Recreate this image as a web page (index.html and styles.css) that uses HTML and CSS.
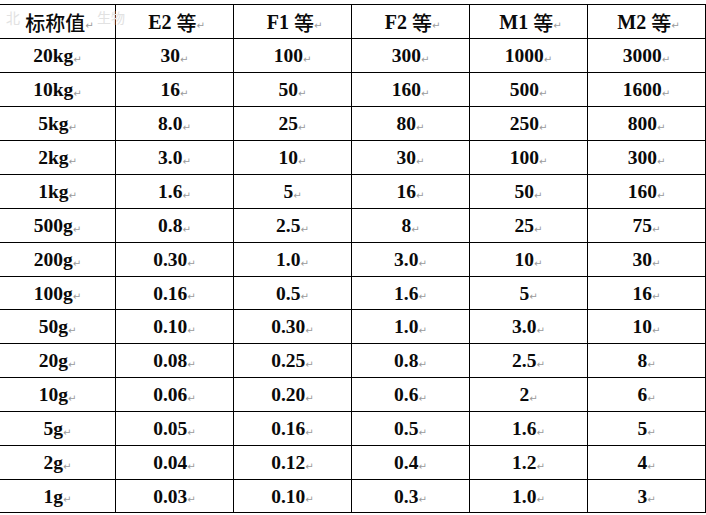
FILE: index.html
```html
<!DOCTYPE html>
<html lang="zh">
<head>
<meta charset="utf-8">
<title>砝码最大允许误差</title>
<link rel="stylesheet" href="styles.css">
</head>
<body>
<div class="page">
  <span class="watermark wm-left">北</span>
  <span class="watermark wm-right">生物</span>
  <div class="grid">
    <div class="cell head"><span class="cjk">标称值</span><span class="pm">↵</span></div>
    <div class="cell head">E2&nbsp;<span class="cjk">等</span><span class="pm">↵</span></div>
    <div class="cell head">F1&nbsp;<span class="cjk">等</span><span class="pm">↵</span></div>
    <div class="cell head">F2&nbsp;<span class="cjk">等</span><span class="pm">↵</span></div>
    <div class="cell head">M1&nbsp;<span class="cjk">等</span><span class="pm">↵</span></div>
    <div class="cell head">M2&nbsp;<span class="cjk">等</span><span class="pm">↵</span></div>

    <div class="cell">20kg<span class="pm">↵</span></div><div class="cell">30<span class="pm">↵</span></div><div class="cell">100<span class="pm">↵</span></div><div class="cell">300<span class="pm">↵</span></div><div class="cell">1000<span class="pm">↵</span></div><div class="cell">3000<span class="pm">↵</span></div>
    <div class="cell">10kg<span class="pm">↵</span></div><div class="cell">16<span class="pm">↵</span></div><div class="cell">50<span class="pm">↵</span></div><div class="cell">160<span class="pm">↵</span></div><div class="cell">500<span class="pm">↵</span></div><div class="cell">1600<span class="pm">↵</span></div>
    <div class="cell">5kg<span class="pm">↵</span></div><div class="cell">8.0<span class="pm">↵</span></div><div class="cell">25<span class="pm">↵</span></div><div class="cell">80<span class="pm">↵</span></div><div class="cell">250<span class="pm">↵</span></div><div class="cell">800<span class="pm">↵</span></div>
    <div class="cell">2kg<span class="pm">↵</span></div><div class="cell">3.0<span class="pm">↵</span></div><div class="cell">10<span class="pm">↵</span></div><div class="cell">30<span class="pm">↵</span></div><div class="cell">100<span class="pm">↵</span></div><div class="cell">300<span class="pm">↵</span></div>
    <div class="cell">1kg<span class="pm">↵</span></div><div class="cell">1.6<span class="pm">↵</span></div><div class="cell">5<span class="pm">↵</span></div><div class="cell">16<span class="pm">↵</span></div><div class="cell">50<span class="pm">↵</span></div><div class="cell">160<span class="pm">↵</span></div>
    <div class="cell">500g<span class="pm">↵</span></div><div class="cell">0.8<span class="pm">↵</span></div><div class="cell">2.5<span class="pm">↵</span></div><div class="cell">8<span class="pm">↵</span></div><div class="cell">25<span class="pm">↵</span></div><div class="cell">75<span class="pm">↵</span></div>
    <div class="cell">200g<span class="pm">↵</span></div><div class="cell">0.30<span class="pm">↵</span></div><div class="cell">1.0<span class="pm">↵</span></div><div class="cell">3.0<span class="pm">↵</span></div><div class="cell">10<span class="pm">↵</span></div><div class="cell">30<span class="pm">↵</span></div>
    <div class="cell">100g<span class="pm">↵</span></div><div class="cell">0.16<span class="pm">↵</span></div><div class="cell">0.5<span class="pm">↵</span></div><div class="cell">1.6<span class="pm">↵</span></div><div class="cell">5<span class="pm">↵</span></div><div class="cell">16<span class="pm">↵</span></div>
    <div class="cell">50g<span class="pm">↵</span></div><div class="cell">0.10<span class="pm">↵</span></div><div class="cell">0.30<span class="pm">↵</span></div><div class="cell">1.0<span class="pm">↵</span></div><div class="cell">3.0<span class="pm">↵</span></div><div class="cell">10<span class="pm">↵</span></div>
    <div class="cell">20g<span class="pm">↵</span></div><div class="cell">0.08<span class="pm">↵</span></div><div class="cell">0.25<span class="pm">↵</span></div><div class="cell">0.8<span class="pm">↵</span></div><div class="cell">2.5<span class="pm">↵</span></div><div class="cell">8<span class="pm">↵</span></div>
    <div class="cell">10g<span class="pm">↵</span></div><div class="cell">0.06<span class="pm">↵</span></div><div class="cell">0.20<span class="pm">↵</span></div><div class="cell">0.6<span class="pm">↵</span></div><div class="cell">2<span class="pm">↵</span></div><div class="cell">6<span class="pm">↵</span></div>
    <div class="cell">5g<span class="pm">↵</span></div><div class="cell">0.05<span class="pm">↵</span></div><div class="cell">0.16<span class="pm">↵</span></div><div class="cell">0.5<span class="pm">↵</span></div><div class="cell">1.6<span class="pm">↵</span></div><div class="cell">5<span class="pm">↵</span></div>
    <div class="cell">2g<span class="pm">↵</span></div><div class="cell">0.04<span class="pm">↵</span></div><div class="cell">0.12<span class="pm">↵</span></div><div class="cell">0.4<span class="pm">↵</span></div><div class="cell">1.2<span class="pm">↵</span></div><div class="cell">4<span class="pm">↵</span></div>
    <div class="cell">1g<span class="pm">↵</span></div><div class="cell">0.03<span class="pm">↵</span></div><div class="cell">0.10<span class="pm">↵</span></div><div class="cell">0.3<span class="pm">↵</span></div><div class="cell">1.0<span class="pm">↵</span></div><div class="cell">3<span class="pm">↵</span></div>
  </div>
</div>
</body>
</html>
```

FILE: styles.css
```css
html, body {
  margin: 0;
  padding: 0;
  background: #ffffff;
}

.page {
  position: relative;
  width: 706px;
  height: 515px;
  overflow: hidden;
  padding-top: 4px;
  box-sizing: border-box;
}

.grid {
  display: grid;
  grid-template-columns: 116px repeat(5, 118px);
  grid-template-rows: 34px 34px 34px 34px 34px 34px 34px 34px 33px 34px 34px 34px 34px 34px 33px;
  width: 706px;
  border-top: 1px solid #000;
}

.cell {
  box-sizing: border-box;
  border-right: 1px solid #000;
  border-bottom: 1px solid #000;
  display: flex;
  align-items: center;
  justify-content: center;
  font-family: "Liberation Serif", "Noto Sans CJK SC", serif;
  font-weight: bold;
  font-size: 19.5px;
  color: #0a0a0a;
  padding-top: 1px;
  white-space: nowrap;
}

.head {
  font-size: 20px;
  padding-left: 4px;
}

.cjk {
  font-family: "Noto Sans CJK SC", sans-serif;
  font-weight: 500;
  font-size: 20px;
}

.pm {
  font-family: "DejaVu Sans", sans-serif;
  font-weight: normal;
  font-size: 10px;
  color: #9a9a9a;
  margin-left: 0;
  padding-top: 6px;
}

.watermark {
  position: absolute;
  top: 7px;
  font-family: "Noto Sans CJK SC", sans-serif;
  font-size: 14px;
  color: #e2e2e2;
  pointer-events: none;
}

.wm-left {
  left: 6px;
}

.wm-right {
  left: 97px;
}
```
